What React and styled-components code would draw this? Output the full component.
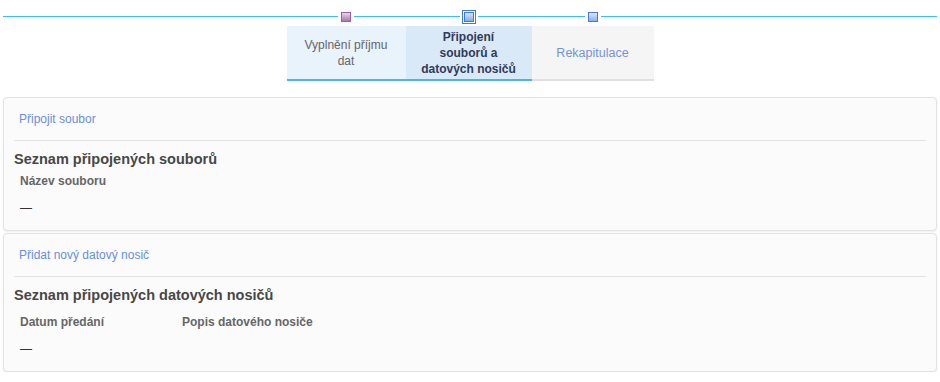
import styled, { createGlobalStyle } from "styled-components";

const GlobalStyle = createGlobalStyle`
  html, body {
    margin: 0;
    padding: 0;
    background: #fff;
  }
  body {
    font-family: "Liberation Sans", Arial, sans-serif;
    font-size: 12px;
    color: #333;
  }
`;

const steps = [
  { label: "Vyplnění příjmu dat", width: 119, tone: "done" },
  { label: "Připojení souborů a datových nosičů", width: 126, tone: "current" },
  { label: "Rekapitulace", width: 122, tone: "todo" },
];

const Page = styled.div`
  width: 940px;
  padding: 11px 3px 0;
  box-sizing: border-box;
`;

const StepRow = styled.div`
  display: flex;
  align-items: center;
  height: 11px;
`;

const Rule = styled.div`
  flex: 1;
  height: 1px;
  background: #3ebfef;
`;

const StepCell = styled.div`
  display: flex;
  align-items: center;
  width: ${(p) => p.$width}px;
`;

const markerColors = {
  done: { border: "#9c5ea6", top: "#e6d6ea", bottom: "#a878b2" },
  current: { border: "#3f7ad6", top: "#d6e6fa", bottom: "#86ace4" },
  todo: { border: "#4a78d0", top: "#d6e6fa", bottom: "#8cb2e8" },
};

const Marker = styled.div`
  width: 8px;
  height: 8px;
  margin: 0 3px;
  border: 1px solid ${(p) => markerColors[p.$tone].border};
  background: linear-gradient(
    ${(p) => markerColors[p.$tone].top},
    ${(p) => markerColors[p.$tone].bottom}
  );
  ${(p) =>
    p.$tone === "current" &&
    `
    box-shadow: 0 0 0 1px #fff, 0 0 0 2px #3f7ad6;
    margin: 0 4px;
  `}
`;

const Tabs = styled.div`
  display: flex;
  justify-content: center;
  margin-top: 4px;
`;

const tabStyles = {
  done: { bg: "#e8f3fc", color: "#666", line: "#4db4e8", weight: 400, size: 12 },
  current: { bg: "#d9e9f8", color: "#2f3b59", line: "#4db4e8", weight: 700, size: 12 },
  todo: { bg: "#f5f5f5", color: "#7393d8", line: "#e0e0e0", weight: 400, size: 12.5 },
};

const Tab = styled.div`
  width: ${(p) => p.$width - 28}px;
  height: 53px;
  padding: 0 14px;
  display: flex;
  align-items: center;
  justify-content: center;
  text-align: center;
  line-height: 16px;
  font-size: ${(p) => tabStyles[p.$tone].size}px;
  background: ${(p) => tabStyles[p.$tone].bg};
  color: ${(p) => tabStyles[p.$tone].color};
  font-weight: ${(p) => tabStyles[p.$tone].weight};
  border-bottom: 2px solid ${(p) => tabStyles[p.$tone].line};
`;

const Panel = styled.section`
  margin-top: ${(p) => p.$top}px;
  background: #fbfbfb;
  border: 1px solid #e2e2e2;
  border-radius: 4px;
  box-shadow: 0 1px 2px rgba(0, 0, 0, 0.07);
  padding: 0 10px 14px;
`;

const Toolbar = styled.div`
  height: 42px;
  line-height: 42px;
  padding: 0 5px;
  border-bottom: 1px solid #e3e3e3;
`;

const ActionLink = styled.a`
  color: #6a8fdb;
  text-decoration: none;
  cursor: pointer;
`;

const Heading = styled.h3`
  margin: 10px 0 0;
  font-size: 14.5px;
  line-height: 17px;
  font-weight: 700;
  color: #474747;
`;

const Table = styled.table`
  border-collapse: collapse;
  margin-top: ${(p) => p.$gap}px;
  th,
  td {
    padding: 0 6px;
    text-align: left;
    vertical-align: middle;
    line-height: 16px;
  }
  th {
    font-weight: 700;
    color: #666;
  }
  td {
    padding-top: 11px;
    color: #333;
  }
`;

const Col = styled.th`
  width: ${(p) => (p.$width ? `${p.$width - 12}px` : "auto")};
`;

const ListPanel = ({ action, title, columns, top, gap }) => (
  <Panel $top={top}>
    <Toolbar>
      <ActionLink>{action}</ActionLink>
    </Toolbar>
    <Heading>{title}</Heading>
    <Table $gap={gap}>
      <thead>
        <tr>
          {columns.map((c) => (
            <Col key={c.label} $width={c.width}>
              {c.label}
            </Col>
          ))}
        </tr>
      </thead>
      <tbody>
        <tr>
          <td colSpan={columns.length}>—</td>
        </tr>
      </tbody>
    </Table>
  </Panel>
);

export default function App() {
  return (
    <>
      <GlobalStyle />
      <Page>
        <StepRow>
          <Rule />
          {steps.map((s) => (
            <StepCell key={s.label} $width={s.width}>
              <Rule />
              <Marker $tone={s.tone} />
              <Rule />
            </StepCell>
          ))}
          <Rule />
        </StepRow>
        <Tabs>
          {steps.map((s) => (
            <Tab key={s.label} $tone={s.tone} $width={s.width}>
              {s.label}
            </Tab>
          ))}
        </Tabs>
        <ListPanel
          top={16}
          gap={5}
          action="Připojit soubor"
          title="Seznam připojených souborů"
          columns={[{ label: "Název souboru" }]}
        />
        <ListPanel
          top={2}
          gap={10}
          action="Přidat nový datový nosič"
          title="Seznam připojených datových nosičů"
          columns={[{ label: "Datum předání", width: 162 }, { label: "Popis datového nosiče" }]}
        />
      </Page>
    </>
  );
}
